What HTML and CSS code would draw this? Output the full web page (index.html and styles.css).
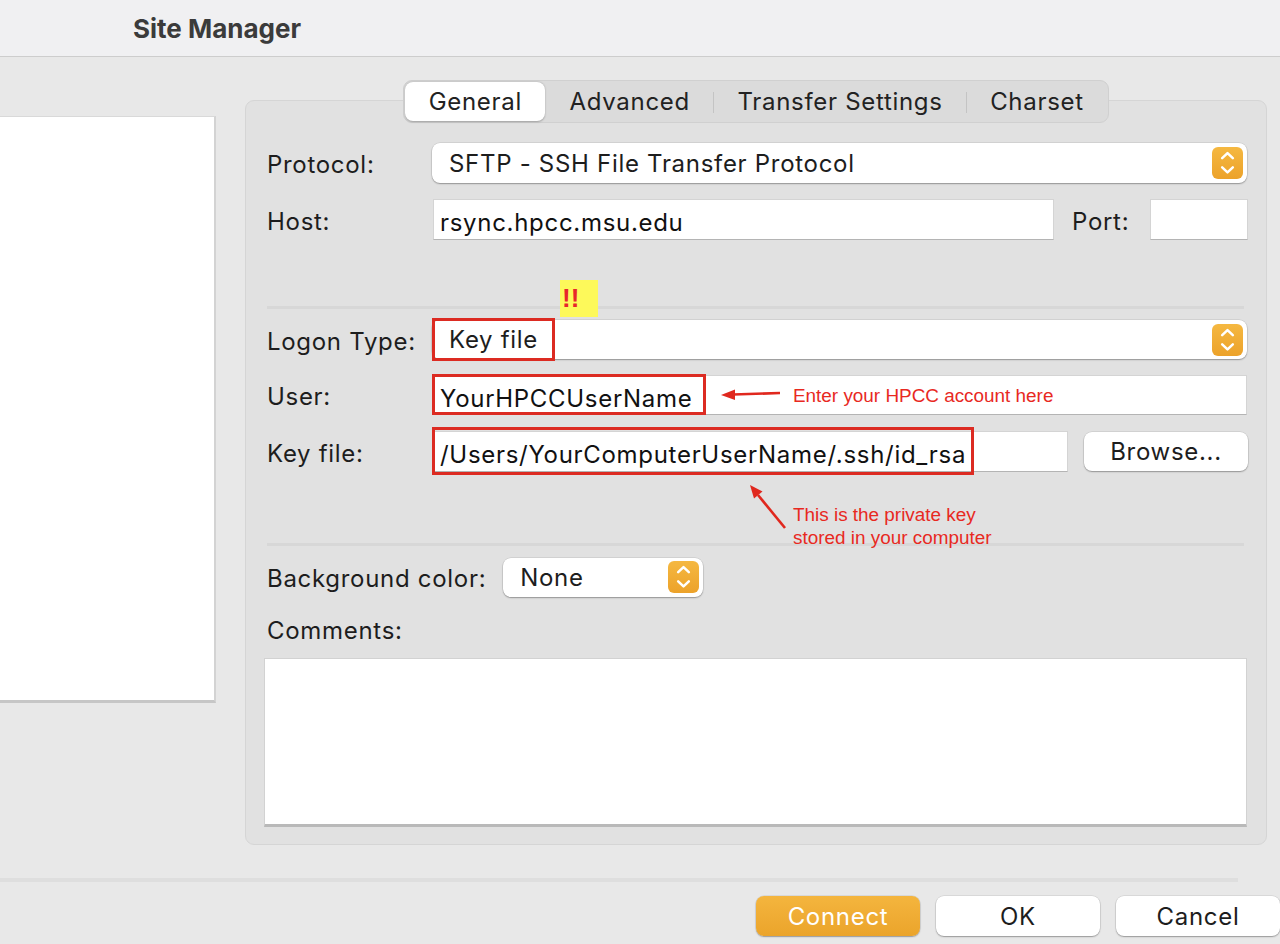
FILE: index.html
```html
<!DOCTYPE html>
<html lang="en">
<head>
<meta charset="utf-8">
<title>Site Manager</title>
<link rel="stylesheet" href="styles.css">
</head>
<body>
<div class="window">
  <header class="titlebar"><h1 class="title">Site Manager</h1></header>
  <div class="content">
    <aside class="site-list"></aside>
    <section class="settings">
      <nav class="tabs">
        <span class="tab active">General</span>
        <span class="tab">Advanced</span>
        <span class="tab sep">Transfer Settings</span>
        <span class="tab sep">Charset</span>
      </nav>
      <div class="group">
        <div class="row row-protocol">
          <span class="label">Protocol:</span>
          <div class="select grow">
            <span class="value">SFTP - SSH File Transfer Protocol</span>
            <span class="stepper"><svg viewBox="0 0 32 32" width="31" height="32"><path d="M10.5 11 L16 5.8 L21.5 11 M10.5 20.5 L16 25.7 L21.5 20.5" fill="none" stroke="#fff" stroke-width="2.6" stroke-linecap="round" stroke-linejoin="round"/></svg></span>
          </div>
        </div>
        <div class="row row-host">
          <span class="label">Host:</span>
          <div class="input host-input">rsync.hpcc.msu.edu</div>
          <span class="port-label">Port:</span>
          <div class="input port-input"></div>
        </div>
        <div class="divider divider-1"></div>
        <div class="row row-logon">
          <span class="label">Logon Type:</span>
          <div class="select grow">
            <span class="value">Key file</span>
            <span class="stepper"><svg viewBox="0 0 32 32" width="31" height="32"><path d="M10.5 11 L16 5.8 L21.5 11 M10.5 20.5 L16 25.7 L21.5 20.5" fill="none" stroke="#fff" stroke-width="2.6" stroke-linecap="round" stroke-linejoin="round"/></svg></span>
          </div>
        </div>
        <div class="row row-user">
          <span class="label">User:</span>
          <div class="input grow">YourHPCCUserName</div>
        </div>
        <div class="row row-key">
          <span class="label">Key file:</span>
          <div class="input key-input">/Users/YourComputerUserName/.ssh/id_rsa</div>
          <button class="btn browse" type="button">Browse...</button>
        </div>
        <div class="divider divider-2"></div>
        <div class="row row-bg">
          <span class="label label-bg">Background color:</span>
          <div class="select color-select">
            <span class="value">None</span>
            <span class="stepper"><svg viewBox="0 0 32 32" width="31" height="32"><path d="M10.5 11 L16 5.8 L21.5 11 M10.5 20.5 L16 25.7 L21.5 20.5" fill="none" stroke="#fff" stroke-width="2.6" stroke-linecap="round" stroke-linejoin="round"/></svg></span>
          </div>
        </div>
        <div class="comments-label">Comments:</div>
        <div class="textarea"></div>
      </div>
    </section>
  </div>
  <div class="footer-sep"></div>
  <footer class="buttons">
    <button class="btn primary" type="button">Connect</button>
    <button class="btn" type="button">OK</button>
    <button class="btn" type="button">Cancel</button>
  </footer>

  <!-- annotations -->
  <div class="note-bang">!!</div>
  <div class="hl hl-logon"></div>
  <div class="hl hl-user"></div>
  <div class="hl hl-key"></div>
  <svg class="arrows" width="1280" height="944" viewBox="0 0 1280 944">
    <line x1="780" y1="393" x2="733" y2="394.5" stroke="#e0281e" stroke-width="2.6"/>
    <polygon points="721,395 735,389.5 735,400" fill="#e0281e"/>
    <line x1="785" y1="528" x2="758" y2="495" stroke="#e0281e" stroke-width="2.6"/>
    <polygon points="750,485 762.5,491.6 754,498.6" fill="#e0281e"/>
  </svg>
  <div class="note note-user">Enter your HPCC account here</div>
  <div class="note note-key">This is the private key<br>stored in your computer</div>
</div>
</body>
</html>
```

FILE: styles.css
```css
* { box-sizing: border-box; }
html, body { margin: 0; padding: 0; }
body {
  width: 1280px;
  height: 944px;
  overflow: hidden;
  background: #e8e8e8;
  font-family: "Inter", "Roboto", "Noto Sans", sans-serif;
  color: #1d1d1d;
  letter-spacing: 0.7px;
}
.window { position: relative; width: 1280px; height: 944px; }

.titlebar {
  height: 57px;
  background: #f0f0f2;
  border-bottom: 1px solid #cdcdcd;
  display: flex;
  align-items: center;
  padding-left: 133px;
}
.title {
  margin: 0;
  font-size: 26px;
  font-weight: 700;
  color: #3b3b3b;
  letter-spacing: 0;
}

.content { display: flex; height: 821px; }

.site-list {
  width: 216px;
  height: 587px;
  margin-top: 59px;
  background: #fff;
  border-top: 1px solid #d9d9d9;
  border-right: 2px solid #d3d3d3;
  border-bottom: 3px solid #c6c6c6;
}

.settings {
  width: 1022px;
  margin-left: 29px;
  display: flex;
  flex-direction: column;
  align-items: center;
}

.tabs {
  position: relative;
  z-index: 1;
  margin-top: 23px;
  height: 43px;
  display: flex;
  align-items: stretch;
  background: #dbdbdb;
  border: 1px solid #d0d0d0;
  border-radius: 9px;
  padding: 1px;
}
.tab {
  position: relative;
  display: flex;
  align-items: center;
  padding: 0 23.5px 0 24px;
  font-size: 24px;
  color: #222;
}
.tab.active {
  background: #fff;
  border-radius: 8px;
  box-shadow: 0 0.5px 2px rgba(0, 0, 0, 0.28);
}
.tab.sep::before {
  content: "";
  position: absolute;
  left: 0;
  top: 10px;
  height: 21px;
  width: 1px;
  background: #c4c4c4;
}

.group {
  width: 1022px;
  height: 745px;
  margin-top: -23px;
  background: #e1e1e1;
  border: 1px solid #d5d5d5;
  border-radius: 9px;
  padding: 42px 19px 0 21px;
  display: flex;
  flex-direction: column;
}

.row { display: flex; align-items: center; }
.label {
  width: 165px;
  flex: none;
  font-size: 24px;
  padding-top: 3px;
  color: #1d1d1d;
}
.grow { flex: 1; }

.select {
  height: 40px;
  background: #fff;
  border-radius: 8px;
  box-shadow: 0 0 0 0.5px rgba(0, 0, 0, 0.12), 0 1px 1.5px rgba(0, 0, 0, 0.3);
  display: flex;
  align-items: center;
  padding: 0 4px 0 17px;
  font-size: 24px;
  color: #1d1d1d;
}
.stepper {
  margin-left: auto;
  width: 31px;
  height: 32px;
  border-radius: 6px;
  background: linear-gradient(#f5b841, #eca22a);
  display: flex;
}

.input {
  height: 41px;
  background: #fff;
  border: 1px solid #d4d4d4;
  border-bottom-color: #b4b4b4;
  font-size: 24px;
  padding: 6px 0 0 6px;
  display: flex;
  align-items: center;
  color: #111;
}

.row-protocol { height: 40px; }
.row-host { height: 41px; margin-top: 16px; }
.host-input { width: 621px; margin-left: 1px; }
.port-label { font-size: 24px; margin-left: 18px; width: 78px; padding-top: 3px; }
.port-input { width: 98px; margin-right: -1px; }

.divider { height: 3px; background: #d7d7d7; margin-right: 3px; }
.divider-1 { margin-top: 66px; }
.divider-2 { margin-top: 71px; }

.row-logon { height: 39px; margin-top: 11px; }
.row-logon .select { height: 39px; }
.row-user { height: 40px; margin-top: 16px; }
.row-user .input { height: 40px; margin-left: 1px; }
.row-key { height: 41px; margin-top: 16px; }
.key-input { width: 635px; margin-left: 1px; }

.btn {
  font-family: inherit;
  font-size: 24px;
  letter-spacing: 0.7px;
  color: #1d1d1d;
  background: #fff;
  border: 0;
  border-radius: 8px;
  box-shadow: 0 0 0 0.5px rgba(0, 0, 0, 0.12), 0 1px 1.5px rgba(0, 0, 0, 0.3);
  width: 164px;
  height: 40px;
  padding: 0;
  display: flex;
  align-items: center;
  justify-content: center;
}
.browse { margin-left: 16px; height: 39px; margin-right: -1px; }

.row-bg { height: 40px; margin-top: 11px; }
.label-bg { width: auto; margin-right: 17px; }
.color-select { width: 200px; height: 39px; }

.comments-label { font-size: 24px; margin-top: 19px; line-height: 30px; }
.textarea {
  margin-top: 12px;
  margin-left: -3px;
  height: 169px;
  background: #fff;
  border: 1px solid #d2d2d2;
  border-bottom: 3px solid #b9b9b9;
}

.footer-sep { height: 4px; background: #dedede; margin-right: 42px; }
.buttons {
  display: flex;
  justify-content: flex-end;
  gap: 16px;
  padding-top: 14px;
}
.btn.primary {
  color: #fff;
  background: linear-gradient(#f4b53e, #eba42b);
}

/* annotations layered over the dialog */
.note-bang {
  position: absolute;
  left: 560px;
  top: 280px;
  width: 38px;
  height: 37px;
  background: #fdf95a;
  color: #e8262a;
  font-family: "Liberation Sans", Arial, sans-serif;
  font-weight: 700;
  font-size: 26px;
  line-height: 37px;
  padding-left: 2px;
  letter-spacing: 0;
}
.hl { position: absolute; border: 3px solid #dc2b22; }
.hl-logon { left: 432px; top: 318px; width: 123px; height: 43px; }
.hl-user { left: 432px; top: 374px; width: 274px; height: 41px; }
.hl-key { left: 432px; top: 427px; width: 542px; height: 48px; }
.arrows { position: absolute; left: 0; top: 0; pointer-events: none; }
.note {
  position: absolute;
  color: #e8291f;
  font-family: "Liberation Sans", Arial, sans-serif;
  font-size: 18.9px;
  line-height: 23px;
  letter-spacing: 0;
}
.note-user { left: 793px; top: 384px; }
.note-key { left: 793px; top: 503px; }
```
